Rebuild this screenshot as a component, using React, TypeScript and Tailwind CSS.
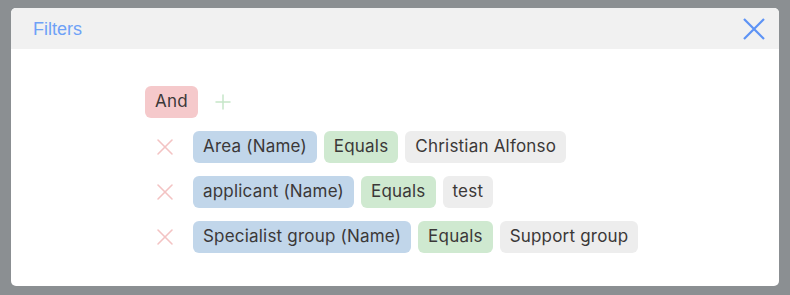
import { X, Plus } from 'lucide-react';

interface Condition {
  field: string;
  op: string;
  value: string;
}

const CONDITIONS: Condition[] = [
  { field: 'Area (Name)', op: 'Equals', value: 'Christian Alfonso' },
  { field: 'applicant (Name)', op: 'Equals', value: 'test' },
  { field: 'Specialist group (Name)', op: 'Equals', value: 'Support group' },
];

function Chip({ children, className }: { children: React.ReactNode; className: string }) {
  return (
    <span className={`h-8 px-[10px] rounded-md flex items-center text-[17px] tracking-[0.2px] text-[#3b3838] ${className}`}>
      {children}
    </span>
  );
}

export default function App() {
  return (
    <div className="w-[790px] h-[295px] bg-[#8b8f92] pt-2 pl-[11px] font-['Inter',sans-serif]">
      <div className="w-[768px] h-[278px] bg-white rounded-[5px] overflow-hidden">
        <div className="h-[41px] bg-[#f1f1f1] flex items-center justify-between pl-[22px] pr-[14px]">
          <span className="text-[18px] text-[#6ea1f7] font-['Liberation_Sans',sans-serif] pt-[1px]">Filters</span>
          <svg width="22" height="22" viewBox="0 0 22 22" className="text-[#5d93f5]">
            <path d="M1 1L21 21M21 1L1 21" stroke="currentColor" strokeWidth="2.2" fill="none" />
          </svg>
        </div>

        <div className="pl-[134px] pt-[37px] flex flex-col gap-[13px]">
          <div className="flex items-center gap-[13px]">
            <Chip className="bg-[#f5c9cb]">And</Chip>
            <Plus className="w-[24px] h-[24px] text-[#c6e6c8]" strokeWidth={1.5} />
          </div>
          {CONDITIONS.map((c, i) => (
            <div key={i} className="flex items-center">
              <span className="w-[48px] flex pl-[6px]">
                <X className="w-[28px] h-[28px] text-[#f3c3c3]" strokeWidth={1.3} />
              </span>
              <div className="flex gap-[7px]">
                <Chip className="bg-[#c1d6ea]">{c.field}</Chip>
                <Chip className="bg-[#cfe9d0]">{c.op}</Chip>
                <Chip className="bg-[#ededed]">{c.value}</Chip>
              </div>
            </div>
          ))}
        </div>
      </div>
    </div>
  );
}
